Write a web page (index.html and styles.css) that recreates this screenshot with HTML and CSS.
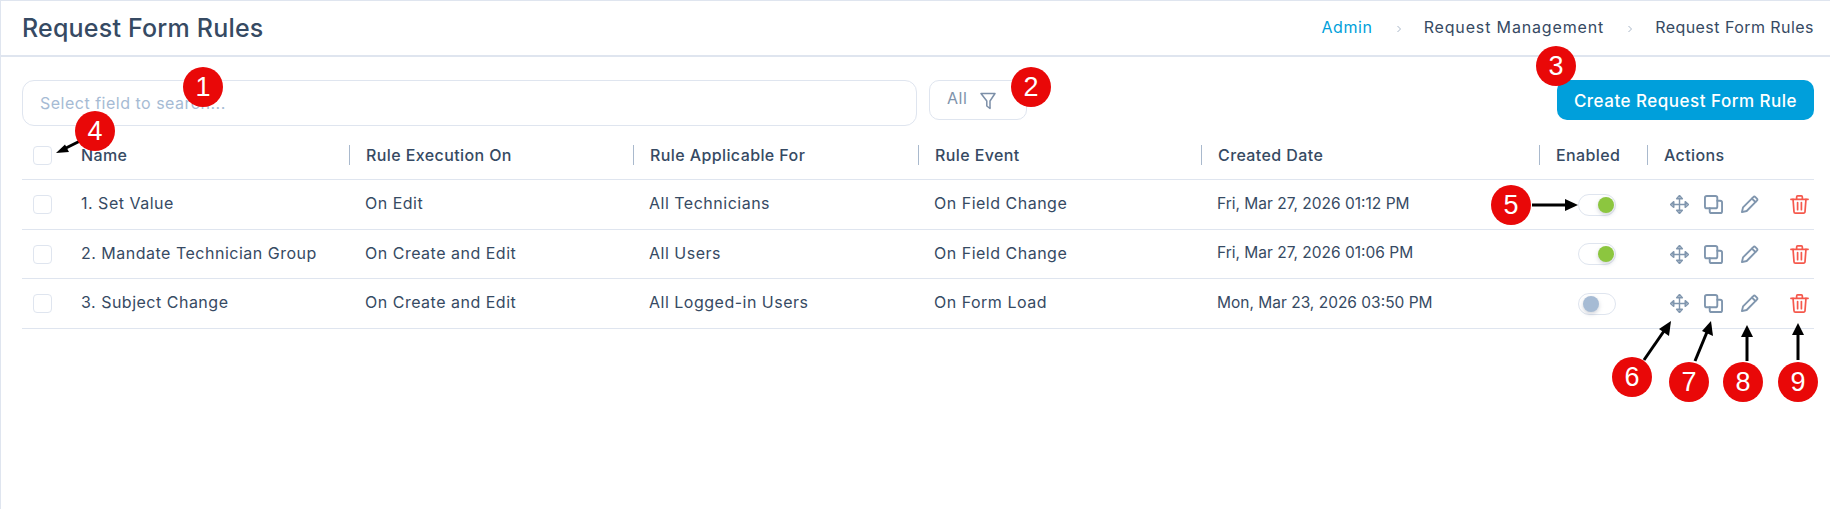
FILE: index.html
```html
<!DOCTYPE html>
<html lang="en">
<head>
<meta charset="utf-8">
<title>Request Form Rules</title>
<link rel="stylesheet" href="styles.css">
</head>
<body>
<div class="page">
  <header class="topbar">
    <h1 class="title">Request Form Rules</h1>
    <nav class="crumbs">
      <a class="crumb-link">Admin</a>
      <svg class="chev" viewBox="0 0 8 10"><path d="M2.5 2l3 3-3 3"/></svg>
      <span class="crumb wide">Request Management</span>
      <svg class="chev" viewBox="0 0 8 10"><path d="M2.5 2l3 3-3 3"/></svg>
      <span class="crumb">Request Form Rules</span>
    </nav>
  </header>

  <main class="content">
    <div class="toolbar">
      <div class="search">Select field to search...</div>
      <div class="filter">
        <span>All</span>
        <svg class="funnel" viewBox="0 0 16 18"><path d="M1 1.500h14L10 9v7.500L6.800 14V9z"/></svg>
      </div>
      <button class="create">Create Request Form Rule</button>
    </div>

    <div class="row head">
      <div class="cell first"><span class="check"></span><span>Name</span></div>
      <div class="cell sep">Rule Execution On</div>
      <div class="cell sep">Rule Applicable For</div>
      <div class="cell sep">Rule Event</div>
      <div class="cell sep">Created Date</div>
      <div class="cell sep">Enabled</div>
      <div class="cell sep">Actions</div>
    </div>

    <div class="row body tall">
      <div class="cell first"><span class="check"></span><span class="txt">1. Set Value</span></div>
      <div class="cell txt">On Edit</div>
      <div class="cell txt">All Technicians</div>
      <div class="cell txt">On Field Change</div>
      <div class="cell txt date">Fri, Mar 27, 2026 01:12 PM</div>
      <div class="cell toggle-cell"><span class="toggle on"><i></i></span></div>
      <div class="cell actions">
        <svg class="ico move" viewBox="0 0 20 20"><use href="#i-move"/></svg>
        <svg class="ico copy" viewBox="0 0 20 20"><use href="#i-copy"/></svg>
        <svg class="ico pencil" viewBox="0 0 20 20"><use href="#i-pencil"/></svg>
        <svg class="ico trash" viewBox="0 0 20 20"><use href="#i-trash"/></svg>
      </div>
    </div>
    <div class="row body">
      <div class="cell first"><span class="check"></span><span class="txt">2. Mandate Technician Group</span></div>
      <div class="cell txt">On Create and Edit</div>
      <div class="cell txt">All Users</div>
      <div class="cell txt">On Field Change</div>
      <div class="cell txt date">Fri, Mar 27, 2026 01:06 PM</div>
      <div class="cell toggle-cell"><span class="toggle on"><i></i></span></div>
      <div class="cell actions">
        <svg class="ico move" viewBox="0 0 20 20"><use href="#i-move"/></svg>
        <svg class="ico copy" viewBox="0 0 20 20"><use href="#i-copy"/></svg>
        <svg class="ico pencil" viewBox="0 0 20 20"><use href="#i-pencil"/></svg>
        <svg class="ico trash" viewBox="0 0 20 20"><use href="#i-trash"/></svg>
      </div>
    </div>
    <div class="row body tall">
      <div class="cell first"><span class="check"></span><span class="txt">3. Subject Change</span></div>
      <div class="cell txt">On Create and Edit</div>
      <div class="cell txt">All Logged-in Users</div>
      <div class="cell txt">On Form Load</div>
      <div class="cell txt date">Mon, Mar 23, 2026 03:50 PM</div>
      <div class="cell toggle-cell"><span class="toggle"><i></i></span></div>
      <div class="cell actions">
        <svg class="ico move" viewBox="0 0 20 20"><use href="#i-move"/></svg>
        <svg class="ico copy" viewBox="0 0 20 20"><use href="#i-copy"/></svg>
        <svg class="ico pencil" viewBox="0 0 20 20"><use href="#i-pencil"/></svg>
        <svg class="ico trash" viewBox="0 0 20 20"><use href="#i-trash"/></svg>
      </div>
    </div>
  </main>
</div>

<svg class="defs" width="0" height="0">
  <defs>
    <g id="i-move">
      <path class="thin" d="M10 3v14M3 10h14"/>
      <path class="solid" d="M10 .5l3 3.500H7zM10 19.500l-3-3.500h6zM.5 10L4 7v6zM19.500 10L16 13V7z"/>
    </g>
    <g id="i-copy">
      <rect x="1" y="1" width="13" height="13" rx="2"/>
      <path d="M14 6h3a2 2 0 0 1 2 2v9a2 2 0 0 1-2 2H8a2 2 0 0 1-2-2v-3"/>
    </g>
    <g id="i-pencil">
      <path d="M2 18l1.200-5L14 2.200a1.600 1.600 0 0 1 2.200 0l1.600 1.600a1.600 1.600 0 0 1 0 2.200L7 16.800z"/>
      <path d="M12.600 3.800l3.600 3.600"/>
    </g>
    <g id="i-trash">
      <path d="M1 4.500h18M7 4.500V2a1 1 0 0 1 1-1h4a1 1 0 0 1 1 1v2.500"/>
      <path d="M3.200 4.500l1 13a1.500 1.500 0 0 0 1.500 1.500h8.600a1.500 1.500 0 0 0 1.500-1.500l1-13"/>
      <path d="M8 8v7.500M12 8v7.500"/>
    </g>
  </defs>
</svg>

<svg class="arrows" viewBox="0 0 1830 509">
  <g class="arrow-lines">
    <path d="M80 141L62 150"/>
    <path d="M1532 205H1566"/>
    <path d="M1644 360L1664 331"/>
    <path d="M1695 361L1707 332"/>
    <path d="M1747 361V336"/>
    <path d="M1798 360V334"/>
  </g>
  <g class="arrow-heads">
    <path d="M56 153L65 144.500 69 152z"/>
    <path d="M1578 205L1565 199V211z"/>
    <path d="M1671 321L1669 336 1659 329z"/>
    <path d="M1711 321L1713 336 1702 331z"/>
    <path d="M1747 325L1753 337H1741z"/>
    <path d="M1798 323L1804 335H1792z"/>
  </g>
</svg>

<span class="badge b1">1</span>
<span class="badge b2">2</span>
<span class="badge b3">3</span>
<span class="badge b4">4</span>
<span class="badge b5">5</span>
<span class="badge b6">6</span>
<span class="badge b7">7</span>
<span class="badge b8">8</span>
<span class="badge b9">9</span>
</body>
</html>
```
FILE: styles.css
```css
* { box-sizing: border-box; }
html, body { margin: 0; height: 100%; }
body {
  background: #fff;
  font-family: Inter, "Open Sans", sans-serif;
  font-size: 16px;
  letter-spacing: .5px;
  color: #364a63;
  overflow: hidden;
  position: relative;
}
.page {
  height: 509px;
  border-left: 1px solid #dfe5ef;
  border-top: 1px solid #dfe5ef;
}
.topbar {
  height: 56px;
  border-bottom: 2px solid #dfe5ef;
  display: flex;
  align-items: center;
  justify-content: space-between;
  padding: 0 16px 2px 21px;
}
.title {
  margin: 2px 0 0;
  font-size: 25px;
  font-weight: 500;
  letter-spacing: .2px;
  color: #364a63;
}
.crumbs { display: flex; align-items: center; letter-spacing: .45px; }
.crumb-link { color: #009fdb; letter-spacing: .6px; }
.crumb { color: #364a63; }
.crumb.wide { letter-spacing: .85px; }
.chev { width: 8px; height: 10px; margin: 3px 21px 0 22px; fill: none; stroke: #a9b7c9; stroke-width: 1; }

.content { padding: 23px 16px 0 21px; }
.toolbar { display: flex; align-items: flex-start; }
.search {
  width: 895px;
  height: 46px;
  border: 1px solid #dfe5ef;
  border-radius: 12px;
  padding-left: 17px;
  display: flex;
  align-items: center;
  color: #a6bbd4;
}
.filter {
  width: 98px;
  height: 40px;
  margin-left: 12px;
  border: 1px solid #dfe5ef;
  border-radius: 10px;
  padding: 0 0 4px 17px;
  display: flex;
  align-items: center;
  gap: 13px;
  color: #8093ab;
}
.funnel { width: 16px; height: 18px; margin-top: 6px; fill: none; stroke: #7c8fa8; stroke-width: 1.500; stroke-linejoin: round; }
.create {
  margin-left: auto;
  width: 257px;
  height: 40px;
  border: 0;
  border-radius: 10px;
  background: #009fdb;
  color: #fff;
  font: 500 17px Inter, sans-serif;
  letter-spacing: .5px;
  padding-top: 2px;
}

.row {
  display: grid;
  grid-template-columns: 327px 284px 285px 283px 338px 108px 1fr;
  align-items: center;
  border-bottom: 1px solid #dfe5ef;
}
.head { height: 54px; font-weight: 500; letter-spacing: .4px; padding-top: 8px; padding-bottom: 3px; }
.body { height: 49px; }
.tall { height: 50px; }
.cell { padding-left: 16px; white-space: nowrap; }
.cell.first { padding-left: 11px; display: flex; align-items: center; gap: 29px; }
.txt { padding-bottom: 3px; }
.date { font-size: 15.500px; letter-spacing: 0; }
.sep { border-left: 1px solid #a9b9cd; line-height: 20px; }
.check {
  width: 19px;
  height: 19px;
  flex: none;
  border: 1px solid #dfe5ef;
  border-radius: 4px;
  background: #fff;
}

.toggle-cell { padding-left: 39px; }
.toggle {
  display: flex;
  align-items: center;
  width: 38px;
  height: 22px;
  border: 1px solid #dfe5ef;
  border-radius: 11px;
  padding: 0 4px;
  background: #fff;
}
.toggle i {
  display: block;
  width: 16px;
  height: 16px;
  border-radius: 50%;
  background: #a6bbd4;
  box-shadow: 0 2px 4px rgba(120, 130, 150, .35);
}
.toggle.on { justify-content: flex-end; padding-right: 1px; }
.toggle.on i { background: #8cc63f; }

.actions { display: flex; align-items: center; padding-left: 23px; }
.ico { width: 19px; height: 19px; fill: none; stroke: #8096ae; stroke-width: 2; stroke-linecap: round; stroke-linejoin: round; flex: none; }
.move { stroke-width: 1.500; }
.move .solid { fill: #8096ae; stroke: none; }
.copy { margin-left: 15px; }
.pencil { margin-left: 17px; }
.trash { margin-left: 31px; stroke: #f5584c; stroke-width: 1.800; }

.defs { position: absolute; }
.arrows { position: absolute; left: 0; top: 0; width: 1830px; height: 509px; pointer-events: none; }
.arrow-lines path { fill: none; stroke: #000; stroke-width: 3; }
.arrow-heads path { fill: #000; }

.badge {
  position: absolute;
  width: 40px;
  height: 40px;
  border-radius: 50%;
  background: #e90808;
  color: #fff;
  font: 400 27px/40px "Liberation Sans", Arial, sans-serif;
  letter-spacing: 0;
  text-align: center;
}
.b1 { left: 183px; top: 67px; }
.b2 { left: 1011px; top: 67px; }
.b3 { left: 1536px; top: 46px; }
.b4 { left: 75px; top: 111px; }
.b5 { left: 1491px; top: 185px; }
.b6 { left: 1612px; top: 357px; }
.b7 { left: 1669px; top: 362px; }
.b8 { left: 1723px; top: 362px; }
.b9 { left: 1778px; top: 362px; }
```
